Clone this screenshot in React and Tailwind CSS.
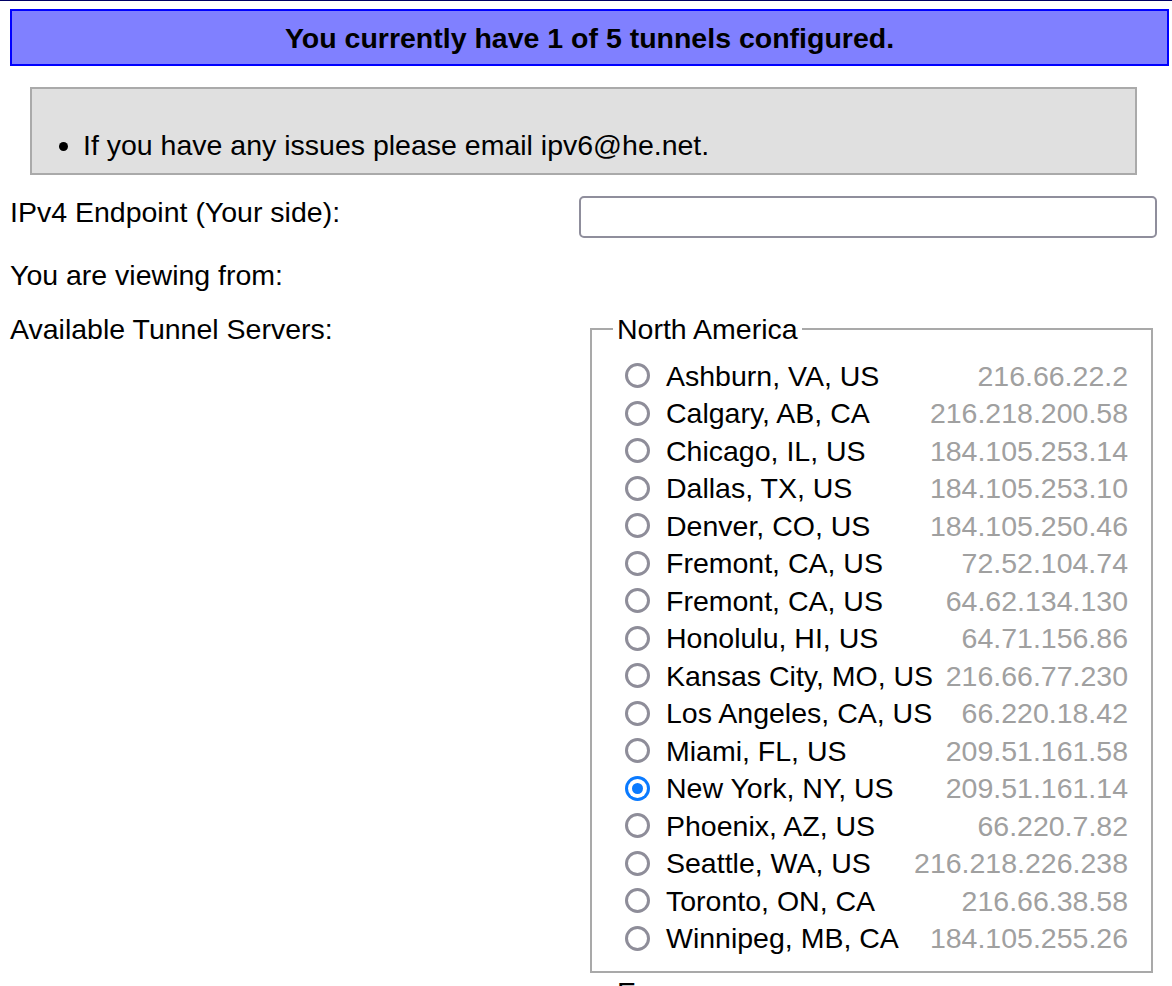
import React, { useState } from 'react';

const northAmerica = [
  ['Ashburn, VA, US', '216.66.22.2'],
  ['Calgary, AB, CA', '216.218.200.58'],
  ['Chicago, IL, US', '184.105.253.14'],
  ['Dallas, TX, US', '184.105.253.10'],
  ['Denver, CO, US', '184.105.250.46'],
  ['Fremont, CA, US', '72.52.104.74'],
  ['Fremont, CA, US', '64.62.134.130'],
  ['Honolulu, HI, US', '64.71.156.86'],
  ['Kansas City, MO, US', '216.66.77.230'],
  ['Los Angeles, CA, US', '66.220.18.42'],
  ['Miami, FL, US', '209.51.161.58'],
  ['New York, NY, US', '209.51.161.14'],
  ['Phoenix, AZ, US', '66.220.7.82'],
  ['Seattle, WA, US', '216.218.226.238'],
  ['Toronto, ON, CA', '216.66.38.58'],
  ['Winnipeg, MB, CA', '184.105.255.26'],
];

const Radio = ({ checked }) =>
  checked ? (
    <span className="w-[25px] h-[25px] rounded-full bg-[#0a7aff] flex items-center justify-center shrink-0">
      <span className="w-[19px] h-[19px] rounded-full bg-white flex items-center justify-center">
        <span className="w-[11px] h-[11px] rounded-full bg-[#0a7aff]" />
      </span>
    </span>
  ) : (
    <span className="w-[25px] h-[25px] rounded-full border-[3px] border-[#8e8d99] bg-white shrink-0" />
  );

const ServerGroup = ({ name, servers, selected, onSelect, className = '' }) => (
  <fieldset className={`ml-[11px] w-[563px] border-2 border-[#a9a9a9] pl-[33px] pr-[23px] pb-[14px] ${className}`}>
    <legend className="ml-[-12px] px-[4px] leading-[28px]">{name}</legend>
    {servers.length > 0 && (
      <div className="pt-[14px]">
        {servers.map(([city, ip], i) => (
          <div
            key={ip}
            onClick={() => onSelect(`${name}-${i}`)}
            className="h-[37.5px] flex items-center justify-between cursor-pointer"
          >
            <div className="flex items-center gap-[16px]">
              <Radio checked={selected === `${name}-${i}`} />
              <span className="leading-[28px]">{city}</span>
            </div>
            <span className="leading-[28px] text-[#a0a0a0]">{ip}</span>
          </div>
        ))}
      </div>
    )}
  </fieldset>
);

export default function App() {
  const [selected, setSelected] = useState('North America-11');
  const [endpoint, setEndpoint] = useState('');

  return (
    <div className="min-h-screen bg-white text-black text-[28.5px] font-['Liberation_Sans',Arial,sans-serif] border-t border-[#000066] overflow-hidden">
      <div className="mr-[3px] ml-[10px] mt-[8px] h-[57px] border-2 border-[#0000ff] bg-[#8080ff] flex items-center justify-center font-bold leading-[28px]">
        You currently have 1 of 5 tunnels configured.
      </div>

      <div className="ml-[30px] mt-[21px] w-[1107px] h-[88px] border-2 border-[#aaaaaa] bg-[#e0e0e0]">
        <ul className="list-disc pl-[51px] pt-[42px] leading-[28px]">
          <li>If you have any issues please email ipv6@he.net.</li>
        </ul>
      </div>

      <div className="mt-[21px] flex">
        <div className="w-[579px] pl-[10px] pt-[2px] leading-[28px]">IPv4 Endpoint (Your side):</div>
        <input
          value={endpoint}
          onChange={(e) => setEndpoint(e.target.value)}
          className="w-[578px] h-[42px] border-2 border-[#8f8e9c] rounded-[5px] px-2 outline-none"
        />
      </div>

      <div className="mt-[23px] flex leading-[28px]">
        <div className="w-[579px] pl-[10px]">You are viewing from:</div>
        <div />
      </div>

      <div className="mt-[26px] flex leading-[28px]">
        <div className="w-[579px] pl-[10px]">Available Tunnel Servers:</div>
        <div>
          <ServerGroup name="North America" servers={northAmerica} selected={selected} onSelect={setSelected} />
          <ServerGroup name="Europe" servers={[]} selected={selected} onSelect={setSelected} className="mt-[5px]" />
        </div>
      </div>
    </div>
  );
}
